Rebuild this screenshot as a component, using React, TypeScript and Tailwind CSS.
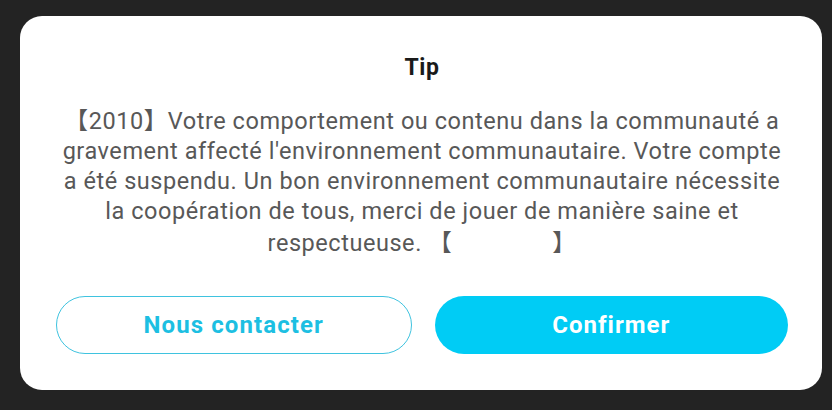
export default function App() {
  return (
    <div className="w-[832px] h-[410px] bg-[#232323] pt-4 px-5" style={{ fontFamily: 'Roboto, "Noto Sans CJK SC", sans-serif' }}>
      <div className="w-[802px] h-[374px] bg-white rounded-[22px] pl-9 pr-[34px] pt-[38px] flex flex-col items-center">
        <h2 className="text-[23px] font-bold text-[#1a1a1a] leading-[28px] tracking-[0.6px]">Tip</h2>
        <p className="mt-[24px] text-center text-[23.5px] leading-[30px] tracking-[0.55px] text-[#585858] whitespace-nowrap">
          【2010】Votre comportement ou contenu dans la communauté a<br />
          gravement affecté l'environnement communautaire. Votre compte<br />
          a été suspendu. Un bon environnement communautaire nécessite<br />
          la coopération de tous, merci de jouer de manière saine et<br />
          <span className="inline-block pt-[2px]">respectueuse. 【<span className="inline-block w-[100px] h-[22px] align-middle bg-white" />】</span>
        </p>
        <div className="mt-auto mb-[36px] w-full flex gap-[23px]">
          <button className="flex-1 h-[58px] rounded-full border border-[#3fc3df] text-[#1dbfe2] text-[24px] font-bold tracking-[1.1px] bg-white">
            Nous contacter
          </button>
          <button className="flex-1 h-[58px] rounded-full bg-[#00ccf5] text-white text-[24px] font-bold tracking-[1px]">
            Confirmer
          </button>
        </div>
      </div>
    </div>
  );
}
